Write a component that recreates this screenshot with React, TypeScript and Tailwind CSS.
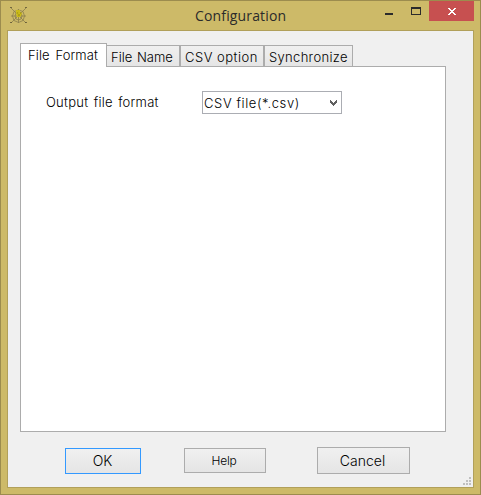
import type { ReactNode } from "react";

const gothic = "font-['Inter','Liberation_Sans',sans-serif] font-light text-black whitespace-pre";

function Tab({ className, children }: { className: string; children: ReactNode }) {
  return (
    <div className={`box-border border border-[#acacac] ${className}`}>{children}</div>
  );
}

function WebIcon() {
  return (
    <svg width="18" height="18" viewBox="0 0 18 18" fill="none" stroke="#8b7f4c" strokeWidth="0.800">
      <path d="M1 1l15 15M16 1L1 16M8.500 2v14M1 9h15" />
      <path d="M4 4.500L8.500 3l4.500 1.500L14.500 9 13 13.500 8.500 15.500 4 13.500 2.500 9zM6 6l2.500-1L11 6l1 3-1 3-2.500 1L6 12 5 9z" />
      <path d="M6 3h4v2l2 1-1 3-1 1H7L6 6z" fill="#cdbf12" stroke="none" opacity=".9" />
      <path d="M7 6h1M10 6h1M8 8h2" stroke="#8a7a10" />
      <path d="M0 0h2v1H0zM15 0h2v1h-2zM0 15h2v1H0zM15 15h2v1h-2z" fill="#5e5534" stroke="none" opacity=".8" />
    </svg>
  );
}

function Grip() {
  return (
    <svg width="8" height="8" viewBox="0 0 8 8" fill="#bfbfbf" shapeRendering="crispEdges">
      <path d="M6 0h2v2H6zM3 3h2v2H3zM6 3h2v2H6zM0 6h2v2H0zM3 6h2v2H3zM6 6h2v2H6z" />
    </svg>
  );
}

export default function App() {
  return (
    <div className="flex h-[495px] w-[481px] flex-col overflow-hidden border border-[#9c8c4e] bg-[#cdba68]">
      <header className="flex h-[29px] shrink-0 items-start">
        <div className="ml-[9px] mt-1.5 w-[18px]"><WebIcon /></div>
        <h1 className="ml-[167px] mt-[5px] w-[110px] whitespace-nowrap font-['Open_Sans',sans-serif] text-[14px] leading-5 tracking-[0.15px] text-[#2b2b2b]">Configuration</h1>
        <div className="ml-[80px] mt-3 h-0.5 w-2 bg-[#2b2b2b]" />
        <div className="ml-[18px] mt-1.5 h-2 w-2.5 border border-t-2 border-[#2b2b2b]" />
        <button className="ml-2 flex h-5 w-[45px] items-center justify-center bg-[#c75050]">
          <svg width="8" height="7" viewBox="0 0 8 7" shapeRendering="crispEdges" fill="#fff">
            <path d="M0 0h2v1h1v1h2V1h1V0h2v1H7v1H6v1H5v1h1v1h1v1h1v1H6V6H5V5H3v1H2v1H0V6h1V5h1V4h1V3H2V2H1V1H0z" />
          </svg>
        </button>
      </header>
      <main className="ml-1.5 flex h-[458px] w-[467px] shrink-0 flex-col border border-[#b1a05a] bg-[#f0f0f0] pl-3 pt-3">
        <div className="flex h-6 items-end">
          <Tab className={`z-10 h-6 w-[87px] border-b-0 bg-white pl-[7px] text-[13px] leading-[23px] tracking-[0.1px] [word-spacing:2px] ${gothic}`}>File Format</Tab>
          <Tab className={`-ml-px h-[22px] w-[74px] bg-linear-to-b from-[#f0f0f0] to-[#e5e5e5] pl-1 text-[13px] leading-[23px] [word-spacing:1px] ${gothic}`}>File Name</Tab>
          <Tab className={`h-[22px] w-[84px] bg-linear-to-b from-[#f0f0f0] to-[#e5e5e5] pl-1 text-[13px] leading-[23px] tracking-[0.5px] ${gothic}`}>CSV option</Tab>
          <Tab className={`h-[22px] w-[89px] bg-linear-to-b from-[#f0f0f0] to-[#e5e5e5] pl-1 text-[13px] leading-[23px] tracking-[0.32px] ${gothic}`}>Synchronize</Tab>
        </div>
        <section className="-mt-px flex h-[366px] w-[426px] shrink-0 items-start border border-[#acacac] bg-white pl-[25px] pt-6">
          <label className={`w-[156px] text-[13px] leading-[22px] tracking-[0.25px] [word-spacing:1.5px] ${gothic}`}>Output file format</label>
          <div className={`flex h-[23px] w-[140px] items-center justify-between border border-[#abadb3] pl-px pr-1 text-[13px] leading-[20px] tracking-[0.6px] ${gothic}`}>
            <span>CSV file(*.csv)</span>
            <svg width="7" height="6" viewBox="0 0 7 6" shapeRendering="crispEdges" fill="#606060">
              <path d="M0 0h1v1h1v1h1v1h1V2h1V1h1V0h1v3H6v1H5v1H4v1H3V5H2V4H1V3H0z" />
            </svg>
          </div>
        </section>
        <footer className="flex h-[55px] items-start">
          <button className={`ml-[45px] mt-4 h-[26px] w-[76px] border border-[#3399ff] bg-linear-to-b from-[#f0f0f0] to-[#e5e5e5] pr-px text-[14px] leading-6 ${gothic}`}>OK</button>
          <button className={`ml-[43px] mt-4 h-[25px] w-[82px] border border-[#acacac] bg-linear-to-b from-[#f0f0f0] to-[#e5e5e5] pr-0.5 text-[12px] leading-[23px] tracking-[-0.2px] ${gothic}`}>Help</button>
          <button className={`ml-[51px] mt-[15px] h-[27px] w-[93px] border border-[#acacac] bg-linear-to-b from-[#f0f0f0] to-[#e5e5e5] pr-0.5 text-[14px] leading-[25px] ${gothic}`}>Cancel</button>
          <div className="ml-[53px] mt-[45px]"><Grip /></div>
        </footer>
      </main>
    </div>
  );
}
